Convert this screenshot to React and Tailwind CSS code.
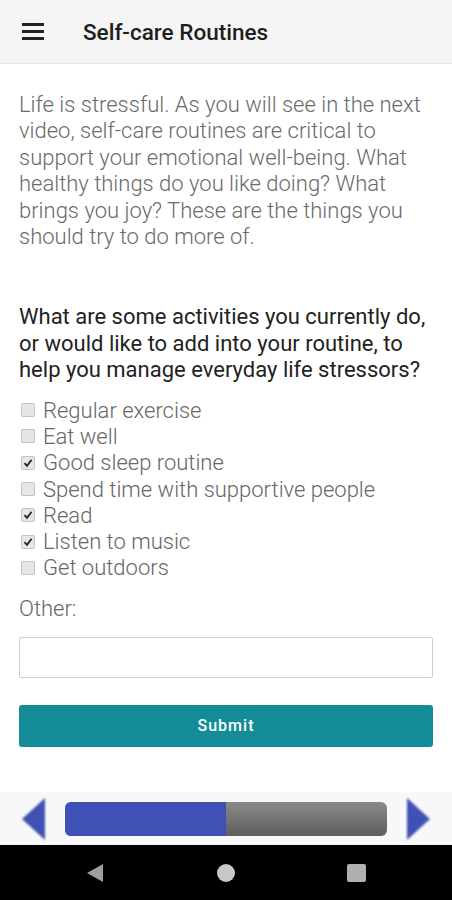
import React from 'react';

const activities = [
  { label: 'Regular exercise', checked: false },
  { label: 'Eat well', checked: false },
  { label: 'Good sleep routine', checked: true },
  { label: 'Spend time with supportive people', checked: false },
  { label: 'Read', checked: true },
  { label: 'Listen to music', checked: true },
  { label: 'Get outdoors', checked: false },
];

const CheckBox = ({ checked }) => (
  <span className="w-[14px] h-[14px] rounded-[2px] border border-[#c4c4c4] bg-[#e6e6e6] flex items-center justify-center shrink-0">
    {checked && (
      <svg width="10" height="10" viewBox="0 0 10 10">
        <path d="M1.5 5.2 L4 7.8 L8.6 1.8" fill="none" stroke="#222" strokeWidth="1.8" />
      </svg>
    )}
  </span>
);

const Arrow = ({ dir }) => (
  <svg width="28" height="46" viewBox="0 0 28 46">
    <defs>
      <filter id={`soft-${dir}`} x="-30%" y="-30%" width="160%" height="160%">
        <feGaussianBlur stdDeviation="1" />
      </filter>
    </defs>
    {dir === 'left' ? (
      <polygon points="26,2 3,23 26,44" fill="#3f51b5" filter={`url(#soft-${dir})`} />
    ) : (
      <polygon points="2,2 25,23 2,44" fill="#3f51b5" filter={`url(#soft-${dir})`} />
    )}
  </svg>
);

const App = () => {
  return (
    <div className="w-[452px] h-[900px] flex flex-col bg-white font-['Roboto',sans-serif] overflow-hidden">
      <header className="h-16 shrink-0 bg-[#f5f5f5] border-b border-[#e6e6e6] flex items-center">
        <div className="w-[22px] ml-[22px] flex flex-col gap-[4.5px]">
          <span className="block h-[2.5px] bg-[#222]" />
          <span className="block h-[2.5px] bg-[#222]" />
          <span className="block h-[2.5px] bg-[#222]" />
        </div>
        <h1 className="ml-[39px] mt-[2px] text-[22.5px] font-medium text-[#1e1e1e]">Self-care Routines</h1>
      </header>

      <main className="flex-1 px-[19px] pt-[28px]">
        <p className="text-[22px] leading-[26.4px] font-light text-[#6a6a6a]">
          Life is stressful. As you will see in the next video, self-care routines are critical to support your emotional well-being. What healthy things do you like doing? What brings you joy? These are the things you should try to do more of.
        </p>

        <p className="mt-[54px] text-[22px] leading-[26.2px] text-[#222]">
          What are some activities you currently do, or would like to add into your routine, to help you manage everyday life stressors?
        </p>

        <ul className="mt-[14px]">
          {activities.map((a) => (
            <li key={a.label} className="h-[26.3px] flex items-center gap-[8px] pl-[2px]">
              <CheckBox checked={a.checked} />
              <span className="text-[22px] font-light text-[#666]">{a.label}</span>
            </li>
          ))}
        </ul>

        <div className="mt-[15px] text-[22px] leading-[26px] font-light text-[#666]">Other:</div>

        <input
          type="text"
          className="mt-[15px] block w-full h-[41px] border-[1.5px] border-[#cfcfcf] rounded-[2px] bg-white outline-none"
        />

        <button className="mt-[27px] w-full h-[42px] rounded-[3px] bg-[#138c97] text-white text-[16px] font-medium tracking-[1px]">
          Submit
        </button>
      </main>

      <div className="h-[53px] shrink-0 bg-[#f8f8f8] flex items-center px-[19px] gap-[18px]">
        <Arrow dir="left" />
        <div className="flex-1 h-[34px] rounded-[6px] overflow-hidden flex bg-gradient-to-b from-[#8a8a8a] to-[#5e5e5e]">
          <div className="w-[50%] bg-[#3f51b5]" />
        </div>
        <Arrow dir="right" />
      </div>

      <nav className="h-[55px] shrink-0 bg-black flex items-center justify-between px-[86px]">
        <svg width="18" height="18" viewBox="0 0 18 18">
          <polygon points="17,0 17,18 1,9" fill="#9e9e9e" />
        </svg>
        <span className="w-[18px] h-[18px] rounded-full bg-[#c8c8c8]" />
        <span className="w-[19px] h-[18px] rounded-[2px] bg-[#b0b0b0]" />
      </nav>
    </div>
  );
};

export default App;
